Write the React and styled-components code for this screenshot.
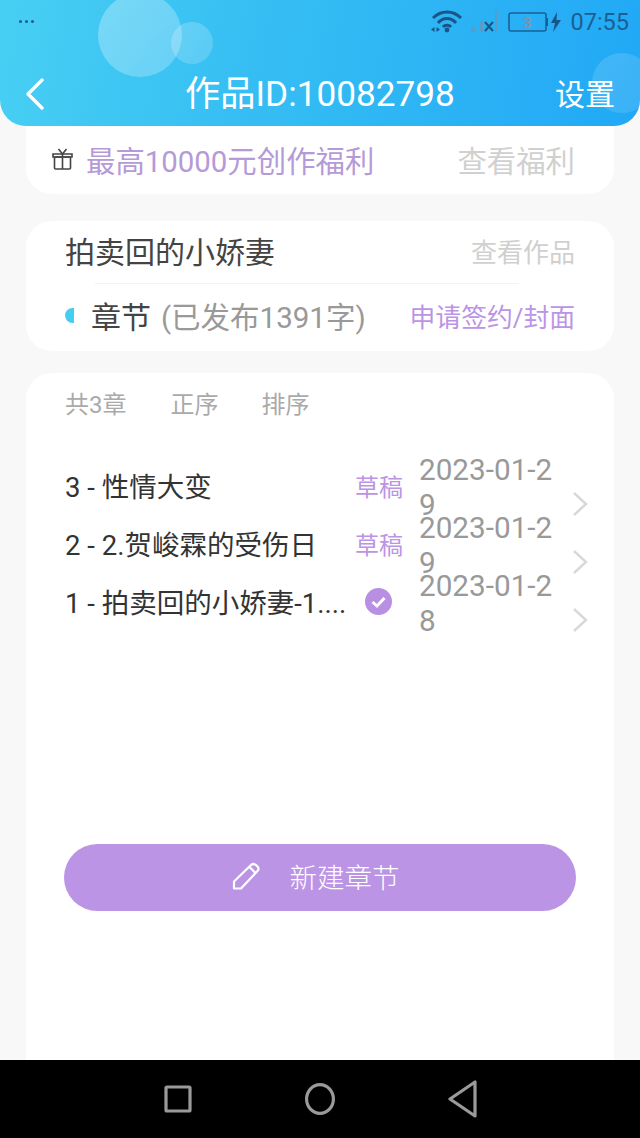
import styled, { createGlobalStyle } from "styled-components";

const Global = createGlobalStyle`
  html, body { margin: 0; padding: 0; background: #f8f8f8; }
  * { box-sizing: border-box; }
  body { font-family: Roboto, "Noto Sans CJK SC", sans-serif; }
`;

const Page = styled.div`
  width: 640px;
  height: 1138px;
  display: flex;
  flex-direction: column;
  overflow: hidden;
`;

const Header = styled.header`
  position: relative;
  z-index: 1;
  height: 126px;
  flex: none;
  overflow: hidden;
  border-radius: 0 0 26px 26px;
  background: linear-gradient(100deg, #47cff3 0%, #36bef3 40%, #21a8f6 100%);
`;

const Bubble = styled.div`
  position: absolute;
  left: ${(p) => p.$x - p.$r}px;
  top: ${(p) => p.$y - p.$r}px;
  width: ${(p) => p.$r * 2}px;
  height: ${(p) => p.$r * 2}px;
  border-radius: 50%;
  background: linear-gradient(135deg, rgba(255, 255, 255, ${(p) => p.$alpha}), rgba(255, 255, 255, ${(p) => p.$alpha * 0.75}));
`;

const StatusBar = styled.div`
  position: relative;
  height: 44px;
  padding: 0 11px 0 19px;
  display: flex;
  align-items: center;
  color: #1c5f92;
`;

const Dots = styled.div`
  display: flex;
  gap: 3px;
  margin-right: auto;
  margin-top: -2px;
`;

const Dot = styled.span`
  width: 3px;
  height: 3px;
  border-radius: 50%;
  background: #1c5f92;
`;

const Clock = styled.span`
  font-size: 23.5px;
  margin-left: 6px;
`;

const NavRow = styled.div`
  position: relative;
  height: 82px;
  padding: 18px 25px 0 25px;
  display: grid;
  grid-template-columns: 1fr auto 1fr;
  align-items: center;
  color: #fff;
`;

const Title = styled.div`
  font-size: 35.2px;
  line-height: 48px;
`;

const Settings = styled.div`
  font-size: 30px;
  margin-top: -4px;
  justify-self: end;
`;

const Main = styled.main`
  flex: 1;
  padding: 0 26px;
  display: flex;
  flex-direction: column;
  background: #f8f8f8;
`;

const Card = styled.section`
  background: #fff;
  border-radius: 26px;
`;

const WelfareCard = styled(Card)`
  height: 68px;
  padding: 0 39px 2px 26px;
  border-radius: 0 0 26px 26px;
  display: flex;
  align-items: center;
`;

const WelfareText = styled.div`
  margin-left: 13px;
  font-size: 29.4px;
  color: #b59ad8;
`;

const MutedLink = styled.div`
  margin-left: auto;
  font-size: ${(p) => p.$size}px;
  color: #d0d0d0;
`;

const WorkCard = styled(Card)`
  margin-top: 27px;
  height: 130px;
  padding: 0 39px;
`;

const WorkRow = styled.div`
  height: 62px;
  padding-bottom: 4px;
  display: flex;
  align-items: center;
`;

const WorkName = styled.div`
  font-size: 30px;
  color: #444;
`;

const Divider = styled.div`
  height: 1px;
  margin: 0 56px 0 30px;
  background: #f3f3f3;
`;

const ChapterRow = styled.div`
  height: 66px;
  padding-bottom: 4px;
  display: flex;
  align-items: center;
`;

const HalfDot = styled.span`
  width: 9px;
  height: 15px;
  margin-right: 17px;
  border-radius: 9px 0 0 9px;
  background: #45cdf2;
`;

const ChapterName = styled.span`
  font-size: 30px;
  color: #444;
`;

const ChapterCount = styled.span`
  margin-left: 10px;
  font-size: 29.5px;
  color: #999;
`;

const ApplyLink = styled.span`
  margin-left: auto;
  font-size: 25.8px;
  color: #bb94e6;
`;

const ListCard = styled(Card)`
  margin-top: 22px;
  flex: 1;
  padding: 0 39px;
  border-radius: 26px 26px 0 0;
  display: flex;
  flex-direction: column;
`;

const SortBar = styled.div`
  height: 62px;
  padding-bottom: 4px;
  display: flex;
  align-items: center;
  font-size: 24px;
  color: #aaa;
`;

const SortLabel = styled.span`
  margin-right: ${(p) => p.$gap}px;
`;

const ChapterList = styled.div`
  margin-top: 15px;
`;

const Row = styled.div`
  height: 58px;
  display: grid;
  grid-template-columns: 280px 74px 140px 1fr;
  align-items: center;
`;

const RowTitle = styled.div`
  margin-bottom: 2px;
  font-size: 27.5px;
  color: #333;
  white-space: nowrap;
  overflow: hidden;
`;

const Draft = styled.div`
  margin: 0 0 2px 10px;
  font-size: 24px;
  color: #bb94e6;
  justify-self: start;
`;

const Published = styled.svg`
  margin: 0 0 2px 20px;
`;

const RowDate = styled.div`
  width: 140px;
  margin-top: 2px;
  font-size: 29.7px;
  line-height: 35px;
  color: #999;
  word-break: break-all;
`;

const Chevron = styled.svg`
  margin-left: 13px;
  margin-top: 35px;
`;

const NewButton = styled.button`
  margin: 220px 0 0 -1px;
  padding: 0 9px 3px 0;
  width: 512px;
  height: 67px;
  flex: none;
  border: 0;
  border-radius: 34px;
  background: #bb94e6;
  color: #fff;
  font-family: inherit;
  font-size: 27.5px;
  font-weight: 300;
  display: flex;
  align-items: center;
  justify-content: center;
  gap: 30px;
`;

const BottomNav = styled.nav`
  height: 78px;
  flex: none;
  background: #000;
  display: flex;
  align-items: center;
  justify-content: center;
  gap: 113px;
  padding-left: 2px;
`;

function Wifi() {
  return (
    <svg width="34" height="24" viewBox="0 0 34 24" fill="none" stroke="#1a5587" strokeWidth="3" style={{ marginTop: -2 }}>
      <path d="M3 9 C11 1 23 1 31 9" />
      <path d="M8 14 C13 8 21 8 26 14" />
      <path d="M13 18 C15 15.5 19 15.5 21 18" />
      <circle cx="17" cy="21" r="2.4" fill="#1a5587" stroke="none" />
      <path d="M4.5 18 L1 20.5 L4.5 23 Z M6.5 18 L10 20.5 L6.5 23 Z" fill="#1a5587" stroke="none" />
    </svg>
  );
}

function Signal() {
  return (
    <svg width="28" height="24" viewBox="0 0 28 24" style={{ marginLeft: 7 }}>
      <rect x="0" y="17" width="4" height="5" fill="#5a9cc8" />
      <rect x="9" y="11" width="3" height="11" fill="#5a9cc8" />
      <rect x="24" y="1" width="2" height="21" fill="#5a9cc8" />
      <path d="M14 12 L22 21 M22 12 L14 21" stroke="#1a5587" strokeWidth="2" />
    </svg>
  );
}

function Battery() {
  return (
    <svg width="56" height="22" viewBox="0 0 56 22" style={{ marginLeft: 9 }}>
      <rect x="1" y="2" width="37" height="18" rx="2" fill="none" stroke="#1c5f92" strokeWidth="1.6" />
      <rect x="38" y="7" width="2" height="8" fill="#1c5f92" />
      <text x="19" y="17" fontSize="15" fontWeight="700" textAnchor="middle" fill="#8a90a8" fontFamily="Roboto">3</text>
      <path d="M49 1 L43 12 H47 L45 21 L53 9 H48.5 Z" fill="#1a5587" />
    </svg>
  );
}

function Gift() {
  return (
    <svg width="21" height="22" viewBox="0 0 21 22" fill="none" stroke="#444" strokeWidth="1.6">
      <rect x="2.5" y="9" width="16" height="12" rx="1" />
      <path d="M1 6 H20 V9 H1 Z M10.5 6 V21" />
      <path d="M6.5 1 L10.5 6 L14.5 1" />
    </svg>
  );
}

function RowArrow() {
  return (
    <Chevron width="16" height="26" viewBox="0 0 16 26" fill="none" stroke="#d8d8d8" strokeWidth="2.4">
      <path d="M2 2 L14 13 L2 24" />
    </Chevron>
  );
}

function App() {
  const chapters = [
    { id: 3, title: "3 - 性情大变", draft: true, date: "2023-01-29" },
    { id: 2, title: "2 - 2.贺峻霖的受伤日", draft: true, date: "2023-01-29" },
    { id: 1, title: "1 - 拍卖回的小娇妻-1....", draft: false, date: "2023-01-28" },
  ];

  return (
    <Page>
      <Global />
      <Header>
        <Bubble $x={140} $y={35} $r={42} $alpha={0.3} />
        <Bubble $x={192} $y={43} $r={21} $alpha={0.22} />
        <Bubble $x={622} $y={83} $r={30} $alpha={0.14} />
        <StatusBar>
          <Dots>
            <Dot />
            <Dot />
            <Dot />
          </Dots>
          <Wifi />
          <Signal />
          <Battery />
          <Clock>07:55</Clock>
        </StatusBar>
        <NavRow>
          <svg width="20" height="32" viewBox="0 0 20 32" fill="none" stroke="#fff" strokeWidth="3.4" strokeLinecap="round" strokeLinejoin="round">
            <path d="M17 2 L3 16 L17 30" />
          </svg>
          <Title>作品ID:10082798</Title>
          <Settings>设置</Settings>
        </NavRow>
      </Header>
      <Main>
        <WelfareCard>
          <Gift />
          <WelfareText>最高10000元创作福利</WelfareText>
          <MutedLink $size={29.4}>查看福利</MutedLink>
        </WelfareCard>
        <WorkCard>
          <WorkRow>
            <WorkName>拍卖回的小娇妻</WorkName>
            <MutedLink $size={26}>查看作品</MutedLink>
          </WorkRow>
          <Divider />
          <ChapterRow>
            <HalfDot />
            <ChapterName>章节</ChapterName>
            <ChapterCount>(已发布1391字)</ChapterCount>
            <ApplyLink>申请签约/封面</ApplyLink>
          </ChapterRow>
        </WorkCard>
        <ListCard>
          <SortBar>
            <SortLabel $gap={44}>共3章</SortLabel>
            <SortLabel $gap={43}>正序</SortLabel>
            <SortLabel>排序</SortLabel>
          </SortBar>
          <ChapterList>
            {chapters.map((item) => (
              <Row key={item.id}>
                <RowTitle>{item.title}</RowTitle>
                {item.draft ? (
                  <Draft>草稿</Draft>
                ) : (
                  <Published width="27" height="27" viewBox="0 0 27 27">
                    <circle cx="13.5" cy="13.5" r="13.5" fill="#b88fe3" />
                    <path d="M7.5 14 L12 18 L19.5 10" fill="none" stroke="#fff" strokeWidth="3" />
                  </Published>
                )}
                <RowDate>{item.date}</RowDate>
                <RowArrow />
              </Row>
            ))}
          </ChapterList>
          <NewButton>
            <svg width="28" height="28" viewBox="0 0 28 28" fill="none" stroke="#fff" strokeWidth="2.2" strokeLinejoin="round">
              <path d="M2 26.5 V19.5 L19 3 Q21.5 1 24 3 L25.5 4.5 Q27.5 7 25.5 9 L9 26.5 Z" />
              <path d="M17.5 5 L23.5 11" />
            </svg>
            <span>新建章节</span>
          </NewButton>
        </ListCard>
      </Main>
      <BottomNav>
        <svg width="28" height="28" viewBox="0 0 28 28" fill="none" stroke="#9a9a9a" strokeWidth="3.2" strokeLinejoin="round">
          <rect x="2" y="2" width="24" height="24" rx="1" />
        </svg>
        <svg width="30" height="32" viewBox="0 0 30 32" fill="none" stroke="#9a9a9a" strokeWidth="3.2">
          <ellipse cx="15" cy="16" rx="13.4" ry="14.4" />
        </svg>
        <svg width="30" height="38" viewBox="0 0 30 38" fill="none" stroke="#9a9a9a" strokeWidth="3.2" strokeLinejoin="round">
          <path d="M27 2 V36 L2 19 Z" />
        </svg>
      </BottomNav>
    </Page>
  );
}

export default App;
